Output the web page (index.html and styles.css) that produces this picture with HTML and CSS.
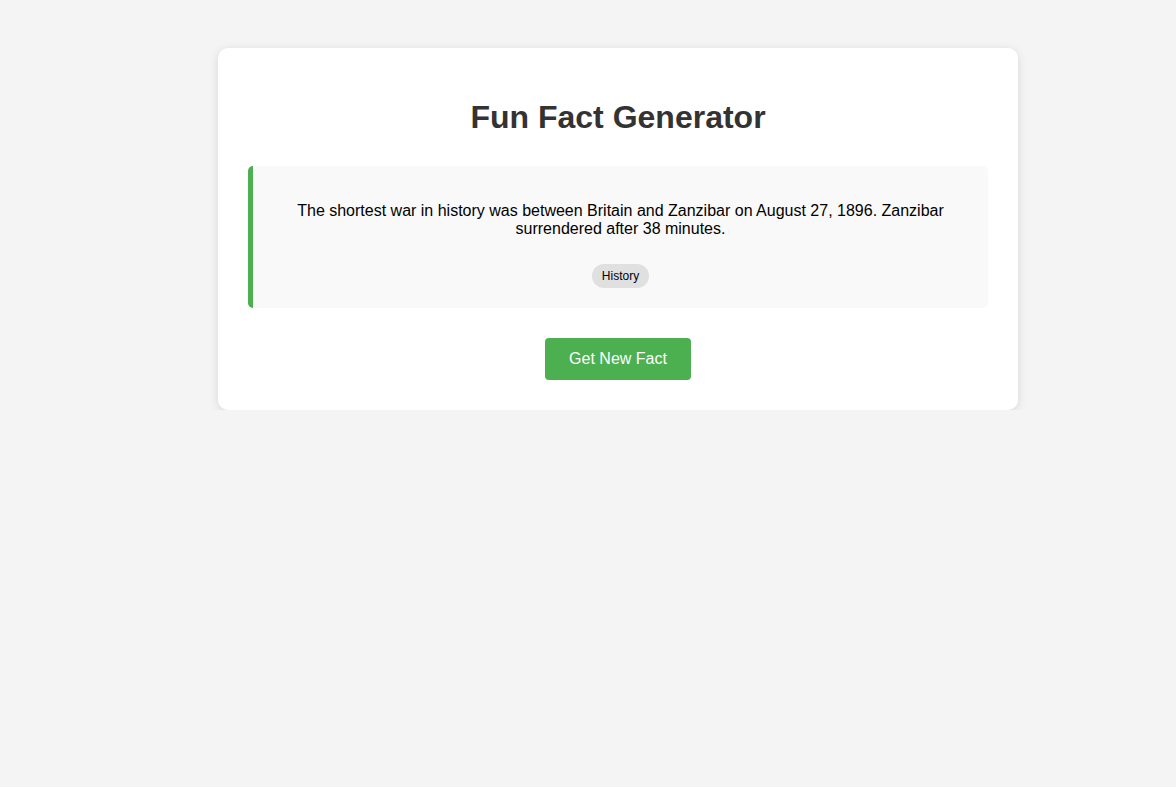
FILE: index.html
```html
<!DOCTYPE html>
<html>
<head>
<meta charset="utf-8">
<title>Fun Fact Generator</title>
<link rel="stylesheet" href="styles.css">
</head>
<body>
<div class="card">
  <h1 class="title">Fun Fact Generator</h1>
  <div class="fact-box">
    <p class="fact-text">The shortest war in history was between Britain and Zanzibar on August 27, 1896. Zanzibar surrendered after 38 minutes.</p>
    <div class="tag-row"><span class="tag">History</span></div>
  </div>
  <div class="actions"><button class="btn">Get New Fact</button></div>
</div>
</body>
</html>
```
FILE: styles.css
```css
html, body {
  margin: 0;
  background: #f4f4f4;
}
body {
  padding: 48px 0 0 60px;
  font-family: "Liberation Sans", Arial, sans-serif;
}
.card {
  width: 800px;
  box-sizing: border-box;
  margin: 0 auto;
  background: #fff;
  border-radius: 10px;
  box-shadow: 0 2px 10px rgba(0, 0, 0, 0.12);
  padding: 30px;
}
.title {
  margin: 21px 0 30px;
  font-size: 32px;
  font-weight: bold;
  text-align: center;
  color: #333;
}
.fact-box {
  background: #f9f9f9;
  border-left: 5px solid #4CAF50;
  border-radius: 5px;
  padding: 20px;
  text-align: center;
}
.fact-text {
  margin: 16px 0 0;
  font-size: 16px;
  color: #000;
}
.tag-row {
  margin-top: 26px;
  display: flex;
  justify-content: center;
}
.tag {
  display: inline-block;
  background: #e0e0e0;
  border-radius: 12px;
  padding: 5px 10px;
  font-size: 12px;
  color: #000;
}
.actions {
  margin-top: 30px;
  display: flex;
  justify-content: center;
}
.btn {
  background: #4CAF50;
  color: #fff;
  border: none;
  border-radius: 4px;
  padding: 12px 24px;
  font-family: "Liberation Sans", Arial, sans-serif;
  font-size: 16px;
  cursor: pointer;
}
```
